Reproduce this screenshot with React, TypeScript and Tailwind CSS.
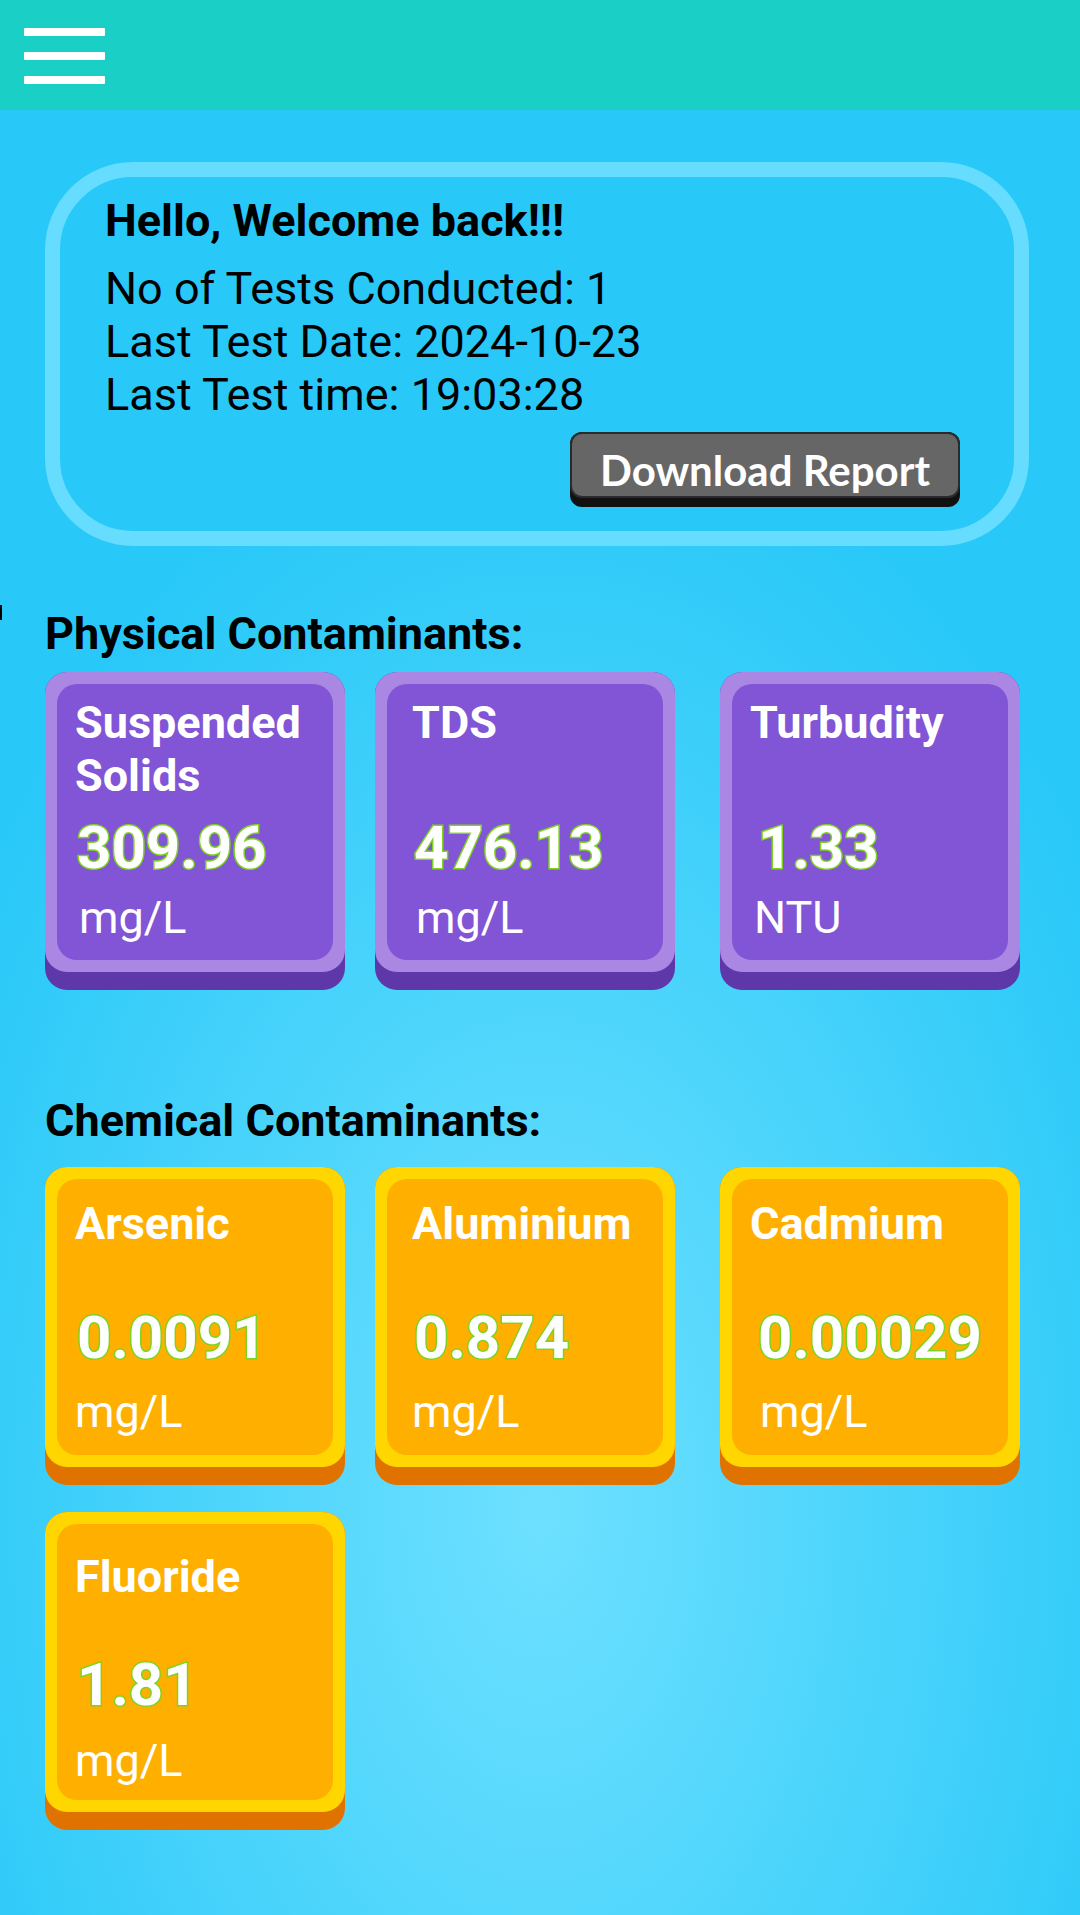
type Tone = "physical" | "chemical";

interface Reading {
  name: string;
  value: string;
  unit: string;
  unitClass: string;
}

const physical: Reading[] = [
  { name: "Suspended Solids", value: "309.96", unit: "mg/L", unitClass: "pl-1" },
  { name: "TDS", value: "476.13", unit: "mg/L", unitClass: "pl-1" },
  { name: "Turbudity", value: "1.33", unit: "NTU", unitClass: "pl-1" },
];

const chemical: Reading[] = [
  { name: "Arsenic", value: "0.0091", unit: "mg/L", unitClass: "" },
  { name: "Aluminium", value: "0.874", unit: "mg/L", unitClass: "" },
  { name: "Cadmium", value: "0.00029", unit: "mg/L", unitClass: "pl-2.5" },
  { name: "Fluoride", value: "1.81", unit: "mg/L", unitClass: "" },
];

const columns = [
  { cell: "mr-[30px]", face: "pl-[18px]", value: "pl-0.5" },
  { cell: "mr-[45px]", face: "pl-[25px]", value: "pl-0.5" },
  { cell: "", face: "pl-[18px]", value: "pl-2" },
];

const tones = {
  physical: {
    base: "bg-[#5e37a9]",
    rim: "bg-[#ab87e4]",
    face: "bg-[#8155d5] pt-3",
    title: "h-[117px]",
    unit: "mt-2",
  },
  chemical: {
    base: "bg-[#e07200]",
    rim: "bg-[#ffd600]",
    face: "bg-[#ffaf00] pt-[18px]",
    title: "h-[106px]",
    unit: "mt-3",
  },
};

function Tile({ reading, tone, index }: { reading: Reading; tone: Tone; index: number }) {
  const t = tones[tone];
  const c = columns[index % 3];
  const lowered = index > 2;
  return (
    <li className={`rounded-[22px] pb-[18px] ${t.base} ${c.cell}`}>
      <div className={`h-[300px] rounded-[22px] p-3 ${t.rim}`}>
        <div className={`h-full rounded-[20px] text-white ${t.face} ${c.face}`}>
          <h3 className={`text-[45px] leading-[53px] font-bold ${t.title} ${lowered ? "mb-0.5 pt-2" : ""}`}>
            {reading.name}
          </h3>
          <p
            className={`text-[60px] leading-[70px] font-bold [paint-order:stroke_fill] [-webkit-text-stroke:3px_#7ed321] ${c.value}`}
          >
            {reading.value}
          </p>
          <p className={`text-[45px] leading-[53px] ${t.unit} ${reading.unitClass} ${lowered ? "pt-0.5" : ""}`}>
            {reading.unit}
          </p>
        </div>
      </div>
    </li>
  );
}

function TileGrid({ readings, tone }: { readings: Reading[]; tone: Tone }) {
  return (
    <ul className="grid grid-cols-[330fr_345fr_300fr] gap-y-[27px]">
      {readings.map((r, i) => (
        <Tile key={r.name} reading={r} tone={tone} index={i} />
      ))}
    </ul>
  );
}

export default function App() {
  return (
    <div className="relative min-h-screen bg-[#28c8f8] bg-[radial-gradient(ellipse_675px_1120px_at_50%_1510px,#6ee0ff_0%,#28c8f8_100%)] font-['Roboto',sans-serif] text-black">
      <header className="flex h-[110px] items-start bg-[#1acfc5] px-6 pt-7">
        <button type="button" aria-label="Open menu" className="flex w-[81px] flex-col gap-4">
          <span className="h-2 w-full rounded-[1px] bg-white" />
          <span className="h-2 w-full rounded-[1px] bg-white" />
          <span className="h-2 w-full rounded-[1px] bg-white" />
        </button>
      </header>

      <span aria-hidden="true" className="absolute top-[605px] left-0 h-[15px] w-0.5 bg-black" />

      <main className="pr-[60px] pb-[85px] pl-[45px]">
        <section className="mt-[52px] -mr-[9px] flex flex-col rounded-[88px] border-[15px] border-[#66dcff] bg-[#28c8f8] pt-[17px] pr-[54px] pb-6 pl-[45px]">
          <h1 className="text-[45px] leading-[53px] font-bold">Hello, Welcome back!!!</h1>
          <div className="mt-[15px] text-[45px] leading-[53px]">
            <p>No of Tests Conducted: 1</p>
            <p>Last Test Date: 2024-10-23</p>
            <p>Last Test time: 19:03:28</p>
          </div>
          <button
            type="button"
            className="mt-[11px] w-[390px] self-end rounded-[12px] bg-[#111] pb-[9px] font-['Lato',sans-serif] text-[42px] leading-[52px] font-bold text-white"
          >
            <span className="block rounded-[12px] border-2 border-[#2b2b2b] bg-[#666] pt-2.5">Download Report</span>
          </button>
        </section>

        <section className="mt-[61px]">
          <h2 className="mb-3 text-[45px] leading-[53px] font-bold">Physical Contaminants:</h2>
          <TileGrid readings={physical} tone="physical" />
        </section>

        <section className="mt-[104px]">
          <h2 className="mb-5 text-[45px] leading-[53px] font-bold">Chemical Contaminants:</h2>
          <TileGrid readings={chemical} tone="chemical" />
        </section>
      </main>
    </div>
  );
}
